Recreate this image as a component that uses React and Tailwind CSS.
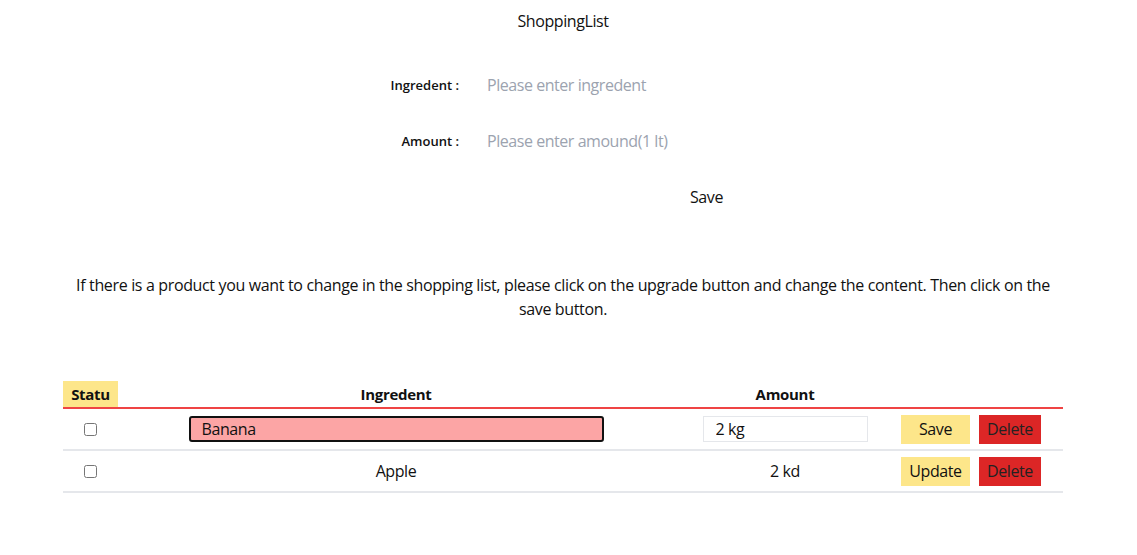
import { useState } from "react";

export default function App() {
  const [items] = useState([
    { id: 1, name: "Banana", amount: "2 kg", editing: true },
    { id: 2, name: "Apple", amount: "2 kd", editing: false },
  ]);

  return (
    <div className="min-h-screen bg-white text-[#111] [font-family:'Open_Sans',sans-serif]">
      <div className="w-[1126px] flex flex-col items-center">
        <h1 className="pt-[9px] text-[16px] leading-6 tracking-[-0.4px]">ShoppingList</h1>

        <div className="mt-10 grid grid-cols-[150px_330px] gap-x-[28px] gap-y-8 items-center">
          <label className="text-right text-[13px] font-semibold leading-6">Ingredent :</label>
          <input
            placeholder="Please enter ingredent"
            className="h-6 text-[16px] tracking-[-0.45px] outline-none placeholder:text-[#9ca3af]"
          />
          <label className="text-right text-[13px] font-semibold leading-6">Amount :</label>
          <input
            placeholder="Please enter amound(1 lt)"
            className="h-6 text-[16px] tracking-[-0.45px] outline-none placeholder:text-[#9ca3af]"
          />
          <div />
          <div>
            <button className="ml-[203px] text-[16px] leading-6 tracking-[-0.4px]">Save</button>
          </div>
        </div>

        <p className="mt-16 w-[1000px] text-center text-[16px] leading-6 tracking-[-0.35px]">
          If there is a product you want to change in the shopping list, please click on the upgrade button and change the content. Then click on the save button.
        </p>

        <div className="mt-[60px] w-[1000px]">
          <div className="grid grid-cols-[55px_556px_222px_167px] h-[28px] border-b-2 border-[#ef4444] text-[15px] font-bold tracking-[-0.3px]">
            <div className="bg-[#fde68a] h-[26px] flex items-center justify-center">Statu</div>
            <div className="flex items-center justify-center h-[26px]">Ingredent</div>
            <div className="flex items-center justify-center h-[26px]">Amount</div>
            <div />
          </div>

          {items.map((item) => (
            <div
              key={item.id}
              className="grid grid-cols-[55px_556px_222px_167px] h-[42px] items-center border-b-2 border-[#e5e7eb] text-[16px] tracking-[-0.4px]"
            >
              <div className="flex justify-center">
                <input type="checkbox" className="w-[13px] h-[13px]" />
              </div>
              <div className="flex justify-center">
                {item.editing ? (
                  <input
                    defaultValue={item.name}
                    className="w-[415px] h-[26px] px-[11px] bg-[#fca5a5] border-2 border-[#111] rounded-[3px] outline-none"
                  />
                ) : (
                  <span>{item.name}</span>
                )}
              </div>
              <div className="flex justify-center">
                {item.editing ? (
                  <input
                    defaultValue={item.amount}
                    className="w-[165px] h-[26px] px-3 border border-[#e5e7eb] outline-none"
                  />
                ) : (
                  <span>{item.amount}</span>
                )}
              </div>
              <div className="flex gap-[9px] pl-[5px]">
                <button className="w-[69px] h-[29px] bg-[#fde68a]">{item.editing ? "Save" : "Update"}</button>
                <button className="w-[62px] h-[29px] bg-[#dc2626] text-[#222]">Delete</button>
              </div>
            </div>
          ))}
        </div>
      </div>
    </div>
  );
}
